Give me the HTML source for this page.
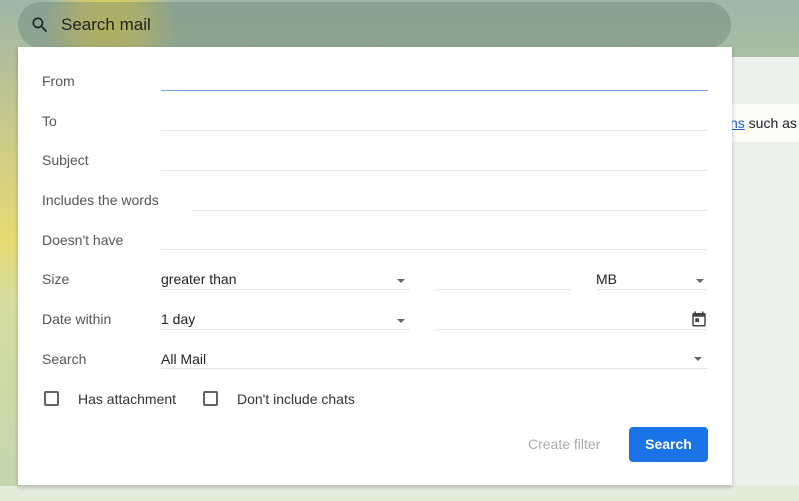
<!DOCTYPE html>
<html><head><meta charset="utf-8"><style>
*{margin:0;padding:0;box-sizing:border-box}
body{width:799px;height:501px;overflow:hidden;position:relative;font-family:"Liberation Sans",Arial,sans-serif;
background:linear-gradient(180deg,#9fb7a8 0%,#aabda4 11.4%,#eef0ec 11.4%,#eef0ec 100%);}
.leftbg{position:absolute;left:0;top:0;width:20px;height:501px;background:linear-gradient(180deg,#9fb5a8 0%,#c9c98c 25%,#e6da72 48%,#d5dc9f 60%,#c2d6b0 100%)}
.glow{position:absolute;left:40px;top:-40px;width:140px;height:130px;border-radius:50%;background:radial-gradient(circle,rgba(236,210,70,.95) 0%,rgba(228,208,90,.75) 35%,rgba(200,200,120,0) 70%)}
.sbar{position:absolute;left:18px;top:2px;width:713px;height:46px;border-radius:24px;background:rgba(110,135,120,.45)}
.band{position:absolute;left:720px;top:104px;width:79px;height:38px;background:#fbfbf9;font-size:14px;color:#222;line-height:38px;padding-left:10px}
.band a{color:#1a5fd0;text-decoration:underline}
.bottombg{position:absolute;left:0;top:486px;width:799px;height:15px;background:#e4ecdc}
.panel{position:absolute;left:18px;top:47px;width:714px;height:438px;background:#fff;box-shadow:0 2px 4px rgba(0,0,0,.25)}
.lbl{position:absolute;left:42px;font-size:14px;color:#555}
.ln{position:absolute;height:1px;background:#e6e6e6}
.val{position:absolute;font-size:14px;color:#222}
.arr{position:absolute;width:0;height:0;border-left:4px solid transparent;border-right:4px solid transparent;border-top:4px solid #666}
.cb{position:absolute;width:15px;height:15px;border:2px solid #5f6368;border-radius:2px}
</style></head><body>
<div class="leftbg"></div>
<div class="bottombg"></div>
<div class="band"><a>ns</a> such as</div>
<div class="glow"></div>
<div class="sbar"></div>
<svg style="position:absolute;left:30px;top:15px" width="20" height="20" viewBox="0 0 24 24"><path d="M15.5 14h-.79l-.28-.27A6.47 6.47 0 0 0 16 9.5 6.5 6.5 0 1 0 9.5 16c1.61 0 3.09-.59 4.23-1.57l.27.28v.79l5 4.99L20.49 19l-4.99-5zm-6 0C7.01 14 5 11.99 5 9.5S7.01 5 9.5 5 14 7.01 14 9.5 11.99 14 9.5 14z" fill="#222"/></svg>
<div style="position:absolute;left:61px;top:15px;font-size:17px;color:#222">Search mail</div>
<div class="panel"></div>
<div class="lbl" style="top:73px">From</div>
<div class="ln" style="left:161px;top:90px;width:547px;background:#7ba4e8"></div>
<div class="lbl" style="top:113px">To</div>
<div class="ln" style="left:161px;top:130px;width:547px"></div>
<div class="lbl" style="top:152px">Subject</div>
<div class="ln" style="left:161px;top:170px;width:547px"></div>
<div class="lbl" style="top:192px">Includes the words</div>
<div class="ln" style="left:192px;top:210px;width:516px"></div>
<div class="lbl" style="top:232px">Doesn't have</div>
<div class="ln" style="left:161px;top:249px;width:547px"></div>
<div class="lbl" style="top:271px">Size</div>
<div class="val" style="left:161px;top:271px">greater than</div>
<div class="arr" style="left:397px;top:279px"></div>
<div class="ln" style="left:161px;top:289px;width:249px"></div>
<div class="ln" style="left:435px;top:289px;width:137px"></div>
<div class="val" style="left:596px;top:271px">MB</div>
<div class="arr" style="left:696px;top:279px"></div>
<div class="ln" style="left:596px;top:289px;width:112px"></div>
<div class="lbl" style="top:311px">Date within</div>
<div class="val" style="left:161px;top:311px">1 day</div>
<div class="arr" style="left:397px;top:319px"></div>
<div class="ln" style="left:161px;top:329px;width:249px"></div>
<div class="ln" style="left:435px;top:329px;width:273px"></div>
<svg style="position:absolute;left:690px;top:310px" width="18" height="18" viewBox="0 0 24 24"><path d="M19 4h-1V2h-2v2H8V2H6v2H5c-1.1 0-2 .9-2 2v14c0 1.1.9 2 2 2h14c1.1 0 2-.9 2-2V6c0-1.1-.9-2-2-2zm0 16H5V9h14v11zM7 11h5v5H7z" fill="#444"/></svg>
<div class="lbl" style="top:351px">Search</div>
<div class="val" style="left:161px;top:351px">All Mail</div>
<div class="arr" style="left:694px;top:357px"></div>
<div class="ln" style="left:161px;top:368px;width:547px"></div>
<div class="cb" style="left:44px;top:391px"></div>
<div class="val" style="left:78px;top:391px;color:#333">Has attachment</div>
<div class="cb" style="left:203px;top:391px"></div>
<div class="val" style="left:237px;top:391px;color:#333">Don't include chats</div>
<div style="position:absolute;left:528px;top:436px;font-size:14px;color:#aaa">Create filter</div>
<div style="position:absolute;left:629px;top:427px;width:79px;height:35px;background:#1a73e8;border-radius:4px;color:#fff;font-size:14px;font-weight:bold;text-align:center;line-height:35px">Search</div>
</body></html>
